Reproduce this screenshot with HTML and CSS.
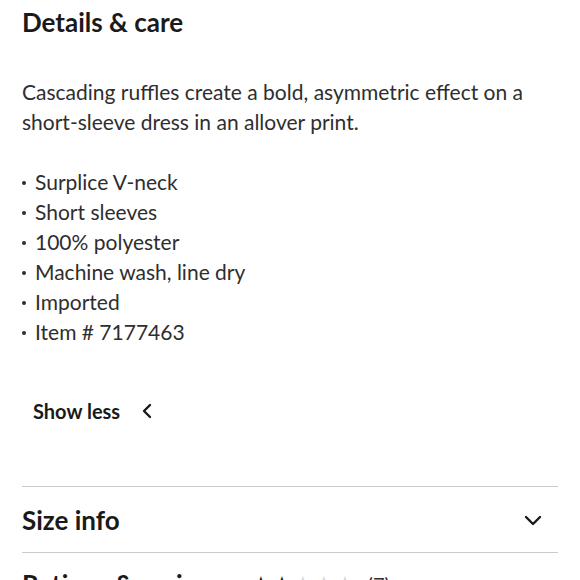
FILE: index.html
```html
<!DOCTYPE html>
<html>
<head>
<meta charset="utf-8">
<link rel="stylesheet" href="styles.css">
</head>
<body>
<div class="page">
  <section class="details">
    <h2 class="title">Details &amp; care</h2>
    <p class="desc">Cascading ruffles create a bold, asymmetric effect on a short-sleeve dress in an allover print.</p>
    <ul class="bullets">
      <li>Surplice V-neck</li>
      <li>Short sleeves</li>
      <li>100% polyester</li>
      <li>Machine wash, line dry</li>
      <li>Imported</li>
      <li>Item # 7177463</li>
    </ul>
    <button class="toggle">Show less
      <svg class="chev-left" width="12" height="16" viewBox="0 0 12 16"><path d="M9 2 L3 8 L9 14" fill="none" stroke="#1a1a1a" stroke-width="2.4" stroke-linecap="round" stroke-linejoin="round"/></svg>
    </button>
  </section>
  <div class="row">
    <h2 class="row-title">Size info</h2>
    <svg class="chev-down" width="18" height="12" viewBox="0 0 18 12"><path d="M2 3 L9 10 L16 3" fill="none" stroke="#1a1a1a" stroke-width="2.4" stroke-linecap="round" stroke-linejoin="round"/></svg>
  </div>
  <div class="row last">
    <h2 class="row-title">Ratings &amp; reviews</h2>
    <span class="stars"><span class="on">★★</span><span class="off">★★★</span></span>
    <span class="count">(7)</span>
  </div>
</div>
</body>
</html>
```
FILE: styles.css
```css
* { box-sizing: border-box; }
html, body { margin: 0; padding: 0; background: #fff; }
body { font-family: Lato, "Noto Sans", sans-serif; color: #1a1a1a; }
.page { padding: 0 22px; }
.title { margin: 0; padding-top: 6px; font-size: 26px; font-weight: 700; line-height: 32px; }
.desc { margin: 39px 0 0; font-size: 21px; line-height: 30px; font-weight: 400; color: #2e2e2e; }
.bullets { list-style: none; margin: 30px 0 0; padding: 0; font-size: 21px; line-height: 30px; color: #2e2e2e; }
.bullets li { display: flex; align-items: center; }
.bullets li::before { content: ""; width: 4px; height: 4px; border-radius: 50%; background: #2e2e2e; margin-right: 9px; margin-top: 2px; }
.toggle { display: flex; align-items: center; gap: 21px; margin: 50px 0 0 11px; padding: 0; border: 0; background: none; font-family: inherit; font-size: 20px; font-weight: 700; color: #1a1a1a; line-height: 28px; }
.details { padding-bottom: 61px; border-bottom: 1px solid #c9cacc; }
.row { display: flex; justify-content: space-between; align-items: center; height: 66px; border-bottom: 1px solid #c9cacc; }
.row.last { border-bottom: 0; align-items: flex-start; justify-content: flex-start; padding-top: 15px; }
.row-title { margin: 0; font-size: 26px; font-weight: 700; line-height: 32px; }
.chev-down { margin-right: 16px; }
.stars { margin-left: 22px; font-size: 22px; line-height: 32px; letter-spacing: 1px; }
.stars .on { color: #1a1a1a; }
.stars .off { color: #d5d6d8; }
.count { margin-left: 12px; font-size: 20px; line-height: 32px; color: #2e2e2e; }
```
